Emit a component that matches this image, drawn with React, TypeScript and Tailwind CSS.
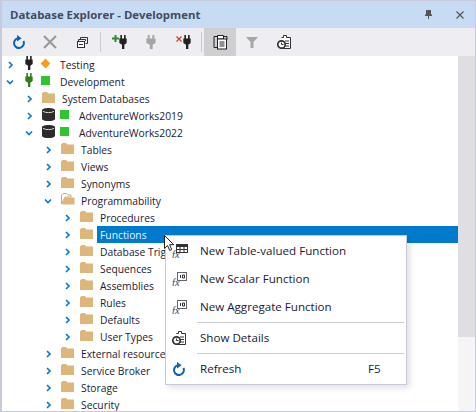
const font = { fontFamily: '"Open Sans", "Noto Sans", sans-serif' };

const RefreshIcon = () => (
  <svg width="13" height="14" viewBox="0 0 13 14">
    <path d="M6 3.3A4.9 4.9 0 1 0 11.4 6" fill="none" stroke="#0e62b0" strokeWidth="2" />
    <path d="M5 0 9.6 3.2 5 6.6Z" fill="#0e62b0" />
  </svg>
);

const DetailsIcon = () => (
  <svg width="14" height="14" viewBox="0 0 14 14">
    <path d="M4.5 2.5h2v-2h3v2h4v11h-8" fill="#fff" stroke="#333" />
    <path d="M8 6h4M8 8.5h4M8 11h4" stroke="#333" />
    <circle cx="4.5" cy="9.5" r="3.7" fill="#fff" stroke="#333" strokeWidth="1.7" />
    <path d="M4.5 7.5v2h2" fill="none" stroke="#333" />
  </svg>
);

const Plug = ({ color = "#222", width = 10 }: { color?: string; width?: number }) => (
  <svg width={width} height="14" viewBox="0 0 12 16" preserveAspectRatio="none">
    <path d="M2 0h2.4v4H7.6V0H10v4h1.5v5L8 11v5H4.5v-5L.5 9V4H2Z" fill={color} />
  </svg>
);

const FnIcon = ({ table }: { table?: boolean }) => (
  <svg width="16" height="14" viewBox="0 0 16 14">
    {table ? (
      <g>
        <rect x="4.5" y=".5" width="11" height="8" fill="#fff" stroke="#333" />
        <path d="M4.5 2h11" stroke="#333" strokeWidth="2" />
        <path d="M4.5 5.5h11M8 .5v8M12 .5v8" stroke="#333" />
      </g>
    ) : (
      <g>
        <rect x="5.5" y=".5" width="9" height="8" fill="#fff" stroke="#666" />
        <path d="M8.5 3v3M10.5 3h2v3h-2Z" stroke="#333" fill="none" />
      </g>
    )}
    <text x="0" y="13.5" fontFamily='"Liberation Serif", serif' fontStyle="italic" fontSize="10.5" fill="#444">
      fx
    </text>
  </svg>
);

const Chevron = ({ open }: { open?: boolean }) => (
  <svg width="8" height="8" viewBox="0 0 8 8">
    <path d={open ? "M1 2.5 4 5.5 7 2.5" : "M3 1 6 4 3 7"} fill="none" stroke="#0b7ad1" strokeWidth="1.7" />
  </svg>
);

const Folder = ({ open }: { open?: boolean }) =>
  open ? (
    <svg width="14" height="12" viewBox="0 0 14 12" className="shrink-0">
      <path d="M.5 11V2L2 .5h3.5L7 2h3v2H4L.5 11Z" fill="#fff" stroke="#c9ab7a" />
      <path d="M.8 11.5 4 4.5h9.5V11.5Z" fill="#dcb67a" />
    </svg>
  ) : (
    <svg width="13" height="11" viewBox="0 0 13 11" className="shrink-0">
      <path d="M0 11V1.5L1.5 0H5L6.5 1.5H13V11Z" fill="#dcb67a" />
    </svg>
  );

const Database = () => (
  <svg width="13" height="13" viewBox="0 0 13 14" className="shrink-0" preserveAspectRatio="none">
    <path d="M0 2.5C0 1 3 0 6.5 0S13 1 13 2.5v9C13 13 10 14 6.5 14S0 13 0 11.5Z" fill="#2c2c2c" />
    <path d="M1 3.6C3 5.4 10 5.4 12 3.6" fill="none" stroke="#ddd" />
  </svg>
);

type Node = {
  label: string;
  level: number;
  open?: boolean;
  kind: "server" | "db" | "folder";
  status?: "diamond" | "green";
  plug?: string;
  selected?: boolean;
};

const nodes: Node[] = [
  { label: "Testing", level: 0, kind: "server", status: "diamond", plug: "#222" },
  { label: "Development", level: 0, open: true, kind: "server", status: "green", plug: "#2f7d1e" },
  { label: "System Databases", level: 1, kind: "folder" },
  { label: "AdventureWorks2019", level: 1, kind: "db", status: "green" },
  { label: "AdventureWorks2022", level: 1, open: true, kind: "db", status: "green" },
  { label: "Tables", level: 2, kind: "folder" },
  { label: "Views", level: 2, kind: "folder" },
  { label: "Synonyms", level: 2, kind: "folder" },
  { label: "Programmability", level: 2, open: true, kind: "folder" },
  { label: "Procedures", level: 3, kind: "folder" },
  { label: "Functions", level: 3, kind: "folder", selected: true },
  { label: "Database Triggers", level: 3, kind: "folder" },
  { label: "Sequences", level: 3, kind: "folder" },
  { label: "Assemblies", level: 3, kind: "folder" },
  { label: "Rules", level: 3, kind: "folder" },
  { label: "Defaults", level: 3, kind: "folder" },
  { label: "User Types", level: 3, kind: "folder" },
  { label: "External resources", level: 2, kind: "folder" },
  { label: "Service Broker", level: 2, kind: "folder" },
  { label: "Storage", level: 2, kind: "folder" },
  { label: "Security", level: 2, kind: "folder" },
];

const indent = ["pl-[4px]", "pl-[23px]", "pl-[42px]", "pl-[61px]"];

const TreeRow = ({ node }: { node: Node }) => (
  <div className={`flex h-[17px] items-center text-[10.3px] ${indent[node.level]}`}>
    <span className="flex w-[8px] shrink-0 items-center">
      <Chevron open={node.open} />
    </span>
    {node.kind === "server" && (
      <span className="mb-[3px] ml-[11px] flex w-[8px] shrink-0 items-center">
        <Plug color={node.plug} width={8} />
      </span>
    )}
    {node.kind === "db" && (
      <span className="mb-[2px] ml-[9px] flex items-center">
        <Database />
      </span>
    )}
    {node.kind === "folder" && (
      <span className="mb-[3px] ml-[9px] flex w-[14px] items-center">
        <Folder open={node.open} />
      </span>
    )}
    {node.status === "diamond" && (
      <span className="mb-[2px] ml-[8px] flex w-[9px] justify-center">
        <span className="h-[7px] w-[7px] rotate-45 bg-[#f7a11a]" />
      </span>
    )}
    {node.status === "green" && (
      <span className={`mb-[2px] h-[9px] w-[9px] bg-[#2ec52e] ${node.kind === "server" ? "ml-[8px]" : "ml-[5px]"}`} />
    )}
    <span
      className={
        node.selected
          ? "ml-[3px] flex h-[17px] flex-1 items-center bg-[#007acc] pl-[3px] pt-[2px] text-[#e8f2fb]"
          : `pt-[2px] text-[#1a1a35] ${node.kind === "folder" ? "ml-[6px]" : "ml-[10px]"}`
      }
    >
      {node.label}
    </span>
  </div>
);

const MenuItem = ({ icon, label, shortcut }: { icon: React.ReactNode; label: string; shortcut?: string }) => (
  <div className="flex h-[28px] items-center">
    <span className="flex w-[34px] shrink-0 pl-[6px]">{icon}</span>
    <span className="flex-1 text-[#1a1a35]">{label}</span>
    {shortcut && <span className="w-[38px] text-[#1a1a35]">{shortcut}</span>}
  </div>
);

const MenuSep = () => <div className="my-px ml-[31px] mr-[2px] h-px bg-[#ccccdc]" />;

const ToolSep = () => <div className="mx-[2px] h-[20px] w-px bg-[#ccccd2]" />;

export default function App() {
  return (
    <div
      style={font}
      className="relative flex h-[412px] w-[476px] flex-col overflow-hidden border border-l-2 border-[#c9c9dc] bg-white text-[11.6px] leading-none"
    >
      {/* Title */}
      <div className="flex h-[27px] shrink-0 items-center bg-[#c7dcf4] pl-[8px] pr-[11px]">
        <span className="flex-1 text-[11.4px] font-bold text-[#444a60]">Database Explorer - Development</span>
        <svg width="7" height="9" viewBox="0 0 7 9" className="mr-[24px]">
          <path d="M1 0h5v4.5h1V6H4v3H3V6H0V4.5h1Z" fill="#555" />
        </svg>
        <svg width="8" height="8" viewBox="0 0 8 8">
          <path d="M.5.5l7 7M7.5.5l-7 7" stroke="#555" strokeWidth="1.2" />
        </svg>
      </div>

      {/* Toolbar */}
      <div className="flex h-[28px] shrink-0 items-center bg-[#eeeef2]">
        <div className="flex w-[32px] justify-center">
          <RefreshIcon />
        </div>
        <div className="flex w-[32px] justify-center">
          <svg width="14" height="14" viewBox="0 0 14 14">
            <path d="M1 1l12 12M13 1 1 13" stroke="#9a9a9a" strokeWidth="2.2" />
          </svg>
        </div>
        <div className="flex w-[32px] justify-center">
          <svg width="11" height="11" viewBox="0 0 11 11">
            <path d="M3.5 2.5V.5h7v6H8.5M1.5 4V2.5h7V4" fill="none" stroke="#333" />
            <rect x=".5" y="4.5" width="7" height="6" fill="#fff" stroke="#333" />
            <path d="M2 7.5h4" stroke="#333" />
          </svg>
        </div>
        <ToolSep />
        <div className="flex w-[32px] justify-center">
          <div className="relative flex w-[15px] justify-end">
            <Plug width={8} />
            <svg width="7" height="7" viewBox="0 0 7 7" className="absolute left-0 top-0">
              <path d="M3.5 0v7M0 3.5h7" stroke="#2f8a2f" strokeWidth="2" />
            </svg>
          </div>
        </div>
        <div className="flex w-[32px] justify-center">
          <Plug color="#a6a6a6" />
        </div>
        <div className="flex w-[32px] justify-center">
          <div className="relative flex w-[15px] justify-end">
            <Plug width={8} />
            <svg width="6" height="6" viewBox="0 0 6 6" className="absolute left-0 top-[1px]">
              <path d="M.5.5l5 5M5.5.5l-5 5" stroke="#c8402e" strokeWidth="1.2" />
            </svg>
          </div>
        </div>
        <ToolSep />
        <div className="flex h-[28px] w-[32px] items-center justify-center bg-[#cfcfd2]">
          <svg width="15" height="16" viewBox="0 0 15 16">
            <path d="M4 2.5H1v11h3M11 2.5h3v3" fill="none" stroke="#222" />
            <path d="M4.5 5V1.5h6V5Z" fill="#fff" stroke="#222" />
            <rect x="4.5" y="5" width="9" height="10" fill="#fff" stroke="#222" />
            <path d="M6.5 8h5M6.5 10h5M6.5 12h5" stroke="#222" />
          </svg>
        </div>
        <div className="flex w-[32px] justify-center">
          <svg width="12" height="11" viewBox="0 0 12 11">
            <path d="M0 0h12L7.5 5v6h-3V5Z" fill="#a6a6a6" />
          </svg>
        </div>
        <div className="flex w-[32px] justify-center">
          <DetailsIcon />
        </div>
      </div>

      {/* Tree + scrollbar */}
      <div className="flex min-h-0 flex-1">
        <div className="flex-1 overflow-hidden">
          {nodes.map((node) => (
            <TreeRow key={node.label} node={node} />
          ))}
        </div>
        <div className="flex w-[17px] shrink-0 flex-col bg-[#f5f5f5]">
          <div className="h-[281px] bg-[#dedee3]" />
        </div>
      </div>

      {/* Context menu */}
      <div className="absolute left-[163px] top-[234px] w-[242px] border border-[#c9c9dc] bg-white py-px shadow-[3px_3px_6px_rgba(0,0,0,0.12)]">
        <MenuItem icon={<FnIcon table />} label="New Table-valued Function" />
        <MenuItem icon={<FnIcon />} label="New Scalar Function" />
        <MenuItem icon={<FnIcon />} label="New Aggregate Function" />
        <MenuSep />
        <MenuItem icon={<DetailsIcon />} label="Show Details" />
        <MenuSep />
        <MenuItem icon={<RefreshIcon />} label="Refresh" shortcut="F5" />
      </div>

      {/* Mouse pointer */}
      <svg width="12" height="18" viewBox="0 0 12 18" className="absolute left-[162px] top-[234px]">
        <path d="M.5.5v13l3-3 2.2 5 2-1-2.2-4.8h4.2Z" fill="#fff" stroke="#222" />
      </svg>
    </div>
  );
}
